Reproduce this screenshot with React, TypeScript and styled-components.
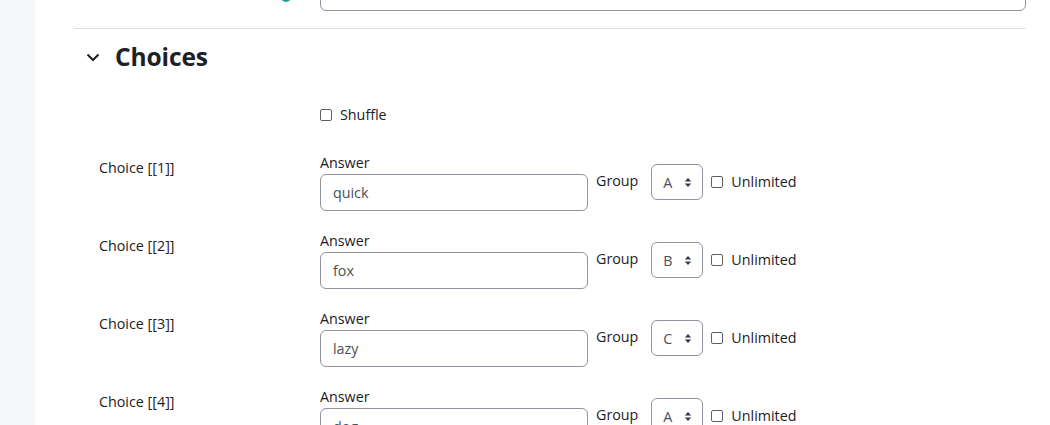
import React from "react";
import { createGlobalStyle, styled } from "styled-components";

const GlobalStyle = createGlobalStyle`
  html, body {
    margin: 0;
    padding: 0;
    background: #ffffff;
    font-family: "Open Sans", "Noto Sans", sans-serif;
    color: #1d2125;
    font-size: 15px;
  }
`;

interface Choice {
  id: number;
  answer: string;
  group: string;
}

const choices: Choice[] = [
  { id: 1, answer: "quick", group: "A" },
  { id: 2, answer: "fox", group: "B" },
  { id: 3, answer: "lazy", group: "C" },
  { id: 4, answer: "dog", group: "A" },
];

export default function App() {
  return (
    <Page>
      <GlobalStyle />
      <SideStrip />
      <Main>
        <PrevRow>
          <PrevIcon />
          <PrevField />
        </PrevRow>
        <Section>
          <SectionHeader>
            <Chevron viewBox="0 0 14 14">
              <path d="M1.5 4.5 L7 10 L12.5 4.5" />
            </Chevron>
            <SectionTitle>Choices</SectionTitle>
          </SectionHeader>

          <ShuffleRow>
            <RowLabel />
            <CheckLabel>
              <CheckBox />
              Shuffle
            </CheckLabel>
          </ShuffleRow>

          {choices.map((c) => (
            <ChoiceRow key={c.id}>
              <ChoiceLabel>Choice [[{c.id}]]</ChoiceLabel>
              <FieldGroup>
                <AnswerCol>
                  <SmallLabel>Answer</SmallLabel>
                  <TextInput>{c.answer}</TextInput>
                </AnswerCol>
                <GroupPart>
                  <GroupLabel>Group</GroupLabel>
                  <Select>
                    <span>{c.group}</span>
                    <SelectArrows viewBox="0 0 8 12">
                      <path d="M4 1 L7.5 5 H0.5 Z" />
                      <path d="M4 11 L7.5 7 H0.5 Z" />
                    </SelectArrows>
                  </Select>
                  <CheckLabel>
                    <CheckBox />
                    Unlimited
                  </CheckLabel>
                </GroupPart>
              </FieldGroup>
            </ChoiceRow>
          ))}
        </Section>
      </Main>
    </Page>
  );
}

const Page = styled.div`
  display: flex;
  width: 1050px;
  height: 425px;
  overflow: hidden;
`;

const SideStrip = styled.div`
  width: 35px;
  flex-shrink: 0;
  background: #f6f7f8;
`;

const Main = styled.div`
  flex: 1;
  padding: 0 24px 0 39px;
`;

const PrevRow = styled.div`
  height: 11px;
  overflow: hidden;
  display: flex;
  align-items: flex-end;
  padding-left: 207px;
`;

const PrevIcon = styled.div`
  width: 10px;
  height: 10px;
  border-radius: 50%;
  background: #1a9e8c;
  margin: 0 29px 8px 0;
  align-self: flex-start;
  transform: translateY(-8px);
`;

const PrevField = styled.div`
  flex: 1;
  height: 36px;
  border: 1px solid #8f959e;
  border-radius: 6px;
  box-sizing: border-box;
`;

const Section = styled.section`
  margin-top: 17px;
  border-top: 1px solid #dee2e6;
`;

const SectionHeader = styled.div`
  display: flex;
  align-items: center;
  gap: 15px;
  padding: 13px 0 0 12px;
  height: 29px;
`;

const Chevron = styled.svg`
  width: 14px;
  height: 14px;
  fill: none;
  stroke: #1d2125;
  stroke-width: 2;
`;

const SectionTitle = styled.h3`
  margin: 0;
  font-size: 24.5px;
  font-weight: 700;
  line-height: 29px;
  letter-spacing: -0.1px;
`;

const ShuffleRow = styled.div`
  display: grid;
  grid-template-columns: 246px 1fr;
  align-items: start;
  margin-top: 33px;
  height: 48px;
`;

const RowLabel = styled.div``;

const CheckLabel = styled.label`
  display: flex;
  align-items: center;
  gap: 8px;
  line-height: 22px;
  font-size: 14.3px;
  white-space: nowrap;
`;

const CheckBox = styled.span`
  display: inline-block;
  width: 12px;
  height: 12px;
  box-sizing: border-box;
  border: 1px solid #5b6066;
  border-radius: 2px;
  background: #fff;
`;

const ChoiceRow = styled.div`
  display: grid;
  grid-template-columns: 246px 1fr;
  height: 78px;
`;

const ChoiceLabel = styled.div`
  padding: 5px 0 0 25px;
  line-height: 22px;
  font-size: 14.3px;
`;

const FieldGroup = styled.div`
  display: flex;
  align-items: flex-start;
`;

const AnswerCol = styled.div`
  display: flex;
  flex-direction: column;
`;

const SmallLabel = styled.div`
  line-height: 22px;
  font-size: 14.3px;
`;

const TextInput = styled.div`
  width: 268px;
  height: 37px;
  box-sizing: border-box;
  border: 1px solid #8f959e;
  border-radius: 6px;
  padding: 0 12px;
  display: flex;
  align-items: center;
  color: #495057;
  font-size: 14.3px;
`;

const GroupPart = styled.div`
  display: flex;
  align-items: center;
  margin-top: 12px;
  height: 36px;
`;

const GroupLabel = styled.span`
  margin: 0 13px 0 8px;
  font-size: 14.3px;
  position: relative;
  top: -2px;
`;

const Select = styled.div`
  width: 52px;
  height: 36px;
  box-sizing: border-box;
  border: 1px solid #8f959e;
  border-radius: 6px;
  display: flex;
  align-items: center;
  justify-content: space-between;
  padding: 0 10px 0 11px;
  color: #495057;
  font-size: 14.3px;
  margin-right: 8px;
`;

const SelectArrows = styled.svg`
  width: 8px;
  height: 11px;
  fill: #343a40;
`;
